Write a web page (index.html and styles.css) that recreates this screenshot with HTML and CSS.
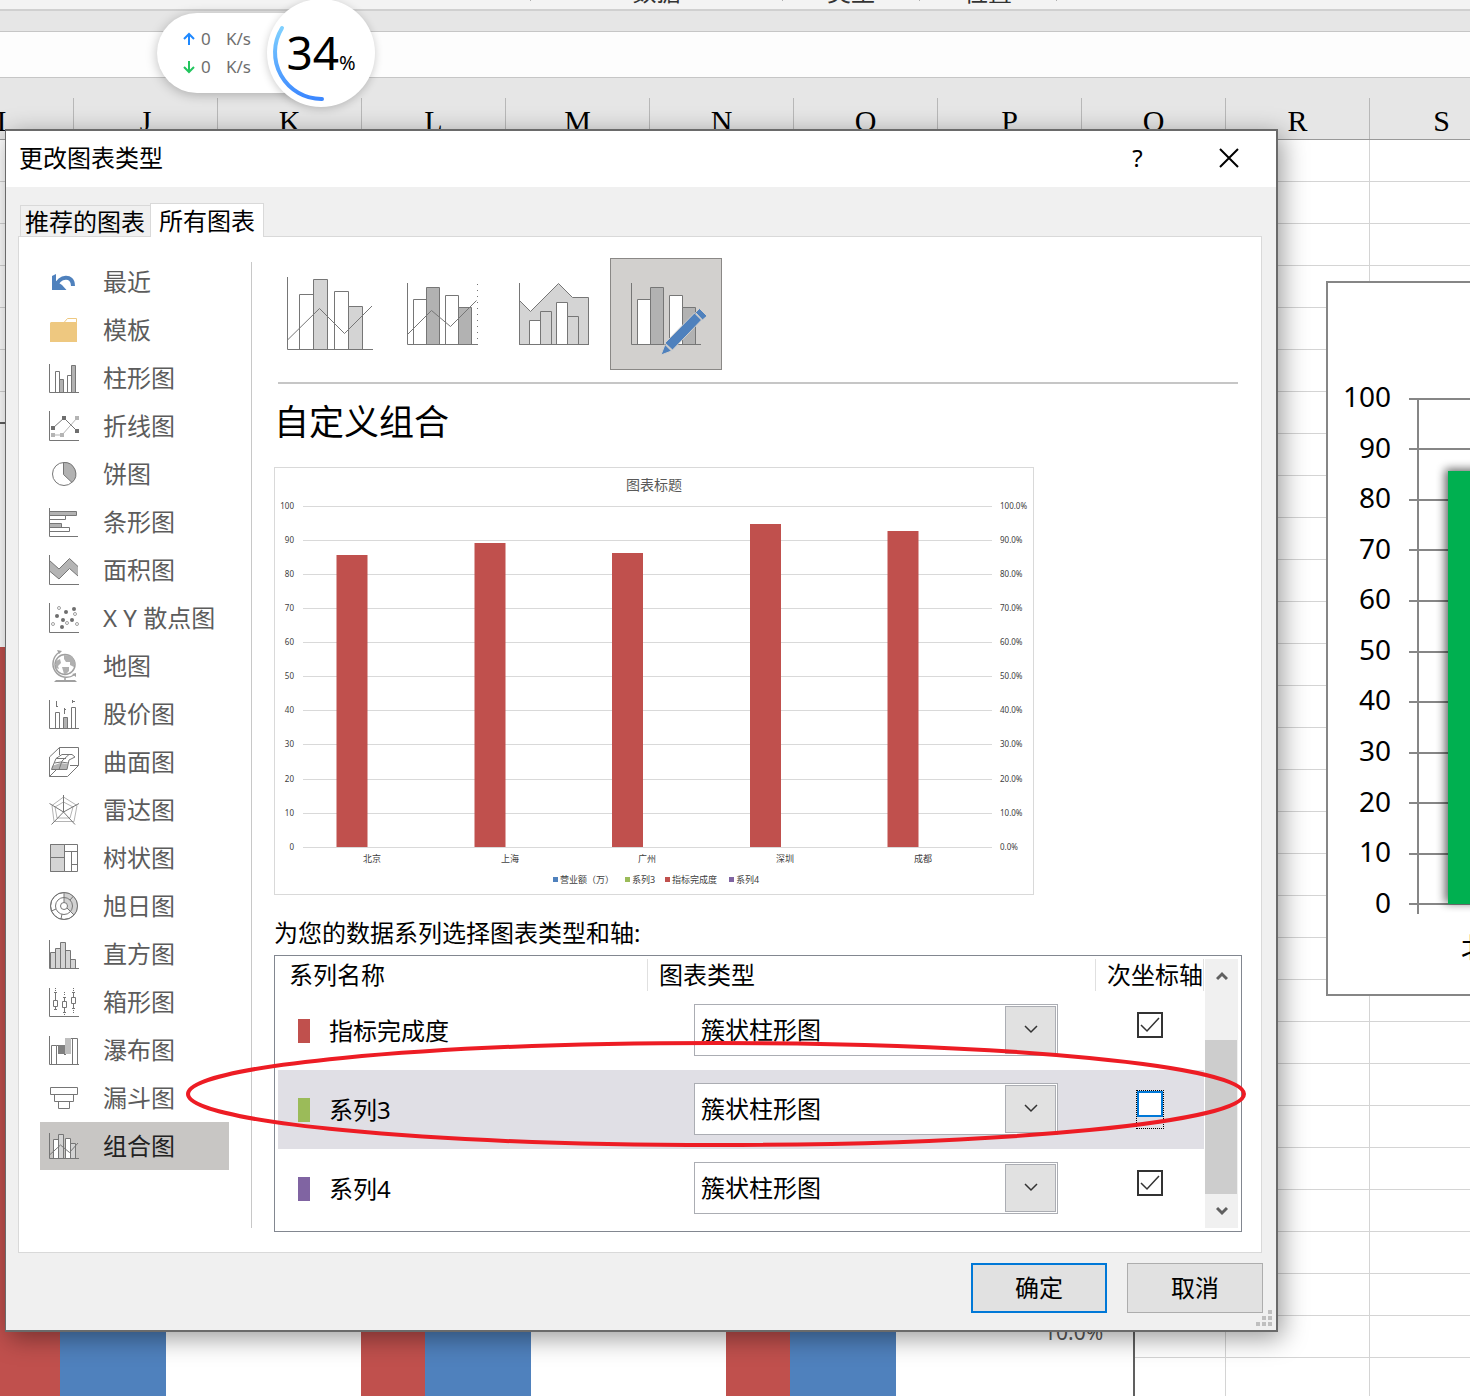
FILE: index.html
```html
<!DOCTYPE html>
<html lang="zh-CN">
<head>
<meta charset="utf-8">
<title>更改图表类型</title>
<meta name="viewport" content="width=device-width, initial-scale=1">
<link rel="stylesheet" href="styles.css">
</head>
<body>
<div class="desktop">

  <div class="workbook">
    <div class="ribbon">
      <span class="ribbon-group ribbon-group-first"></span>
      <span class="ribbon-group ribbon-group-wide">数据</span>
      <span class="ribbon-group">类型</span>
      <span class="ribbon-group">位置</span>
    </div>
    <div class="formula-bar"></div>
    <div class="columns">
      <span class="column">I</span><span class="column">J</span><span class="column">K</span><span class="column">L</span><span class="column">M</span><span class="column">N</span><span class="column">O</span><span class="column">P</span><span class="column">Q</span><span class="column">R</span><span class="column">S</span>
    </div>
    <div class="grid"></div>
  </div>

  <div class="sheet-chart sheet-chart-left">
    <svg width="1133" height="974" viewBox="0 0 1133 974">
      <g fill="#c0504d"><rect x="0" y="223" width="60" height="760"/><rect x="361" y="223" width="64" height="760"/><rect x="726" y="223" width="64" height="760"/></g>
      <g fill="#4f81bd"><rect x="60" y="300" width="106" height="680"/><rect x="425" y="300" width="106" height="680"/><rect x="790" y="300" width="106" height="680"/></g>
      <text class="left-axis" x="1044" y="916">10.0%</text>
    </svg>
  </div>

  <div class="sheet-chart sheet-chart-right">
    <svg width="600" height="711" viewBox="0 0 600 711">
      <defs><filter id="bar-shadow" x="-50%" y="-10%" width="200%" height="120%"><feGaussianBlur stdDeviation="5"/></filter></defs>
      <g stroke="#868686" stroke-width="2">
        <path d="M81 116H600M81 166H600M81 217H600M81 267H600M81 318H600M81 369H600M81 419H600M81 470H600M81 520H600M81 571H600M81 621H600M90 115V631"/>
      </g>
      <rect x="117" y="186" width="130" height="434" fill="#000" opacity=".6" filter="url(#bar-shadow)"/>
      <rect x="120" y="188" width="130" height="433" fill="#00b050"/>
      <g class="right-axis" text-anchor="end">
        <text x="63" y="124">100</text><text x="63" y="175">90</text><text x="63" y="225">80</text><text x="63" y="276">70</text><text x="63" y="326">60</text><text x="63" y="377">50</text><text x="63" y="427">40</text><text x="63" y="478">30</text><text x="63" y="529">20</text><text x="63" y="579">10</text><text x="63" y="630">0</text>
      </g>
      <text class="right-axis" x="133" y="675">北京</text>
    </svg>
  </div>

  <section class="dialog" role="dialog" aria-labelledby="dialog-title">
    <header class="titlebar">
      <h1 class="title" id="dialog-title">更改图表类型</h1>
      <button class="caption-button" type="button" aria-label="帮助">?</button>
      <button class="caption-button" type="button" aria-label="关闭"><svg width="20" height="20" viewBox="0 0 20 20" fill="none" stroke="#000" stroke-width="2"><path d="M1 1L19 19M19 1L1 19"/></svg></button>
    </header>

    <div class="tabs" role="tablist">
      <button class="tab" type="button" role="tab">推荐的图表</button>
      <button class="tab tab-active" type="button" role="tab" aria-selected="true">所有图表</button>
    </div>

    <div class="panel">
      <nav class="types">
        <button class="type" type="button"><svg class="icon" viewBox="0 0 32 32"><path fill="#4f81bd" d="M4 10L8 8V15L14 19L18.500 24H4Z"/><path fill="none" stroke="#4f81bd" stroke-width="4" d="M8 20C11 10 25 8 25 20"/></svg>最近</button>
        <button class="type" type="button"><svg class="icon" viewBox="0 0 32 32"><path fill="#eec880" d="M3 8H29V28H2V9Z"/><path fill="#fff" stroke="#eec880" d="M16 8.500L19.500 4.500H28.500V8.500Z"/></svg>模板</button>
        <button class="type" type="button"><svg class="icon" viewBox="0 0 32 32"><path class="w" d="M7.500 9.500h4v21h-4zM19.500 13.500h4v17h-4z"/><path class="m" d="M11.500 17.500h4v13h-4zM23.500 3.500h4v27h-4z"/><path class="a" d="M1.500 2V30.500H31"/></svg>柱形图</button>
        <button class="type" type="button"><svg class="icon" viewBox="0 0 32 32"><path fill="none" stroke="#b4b4b4" d="M5 25H14L29 8"/><path fill="#b4b4b4" d="M3 23h4v4h-4zM12 23h4v4h-4zM27 6h4v4h-4z"/><path class="a" d="M5 18L16 8L29 21M1.500 1V30.500H31"/><path fill="#6e6e6e" d="M3 16h4v4h-4zM14 6h4v4h-4zM27 19h4v4h-4z"/></svg>折线图</button>
        <button class="type" type="button"><svg class="icon" viewBox="0 0 32 32"><circle class="w" cx="16" cy="16" r="11.500"/><path class="m" d="M15.500 4.500V16.500L24 24.500A11.500 11.500 0 0 0 15.500 4.500Z"/></svg>饼图</button>
        <button class="type" type="button"><svg class="icon" viewBox="0 0 32 32"><path class="m" d="M1.500 5.500h27v4h-27zM1.500 17.500h12v4h-12z"/><path class="w" d="M1.500 9.500h16v4h-16zM1.500 21.500h20v4h-20z"/><path class="a" d="M1.500 2V30.500H30"/></svg>条形图</button>
        <button class="type" type="button"><svg class="icon" viewBox="0 0 32 32"><path fill="#b4b4b4" d="M1.500 6.500L11 15L21.500 4.500L30 12.500V22L21.500 14.500L11 25L1.500 17Z"/><path class="a" d="M1.500 6.500L11 15L21.500 4.500L30 12.500M30 22L21.500 14.500L11 25L1.500 17M1.500 1V30.500H31"/></svg>面积图</button>
        <button class="type" type="button"><svg class="icon" viewBox="0 0 32 32"><g fill="#6e6e6e"><circle cx="9" cy="14" r="2"/><circle cx="18" cy="10" r="2"/><circle cx="26" cy="7" r="2"/><circle cx="15" cy="18" r="2"/><circle cx="24" cy="18" r="2"/><circle cx="14" cy="25" r="2"/></g><g fill="#fff" stroke="#a0a0a0"><circle cx="11" cy="6" r="1.500"/><circle cx="27" cy="12" r="1.500"/><circle cx="5" cy="22" r="1.500"/><circle cx="19" cy="21" r="1.500"/><circle cx="29" cy="22" r="1.500"/></g><path class="a" d="M1.500 1V30.500H31"/></svg>X Y 散点图</button>
        <button class="type" type="button"><svg class="icon" viewBox="0 0 32 32"><circle cx="17" cy="14.500" r="10" fill="#fff" stroke="#a0a0a0" stroke-width="1.500"/><path fill="#b0b0b0" d="M16 5L24 6L27 12L26 17L22 15V12H18L16 9ZM8 11L12 9L13 13L10 16L11 19L8 18ZM14 17H21V21L18 24H16Z"/><path fill="none" stroke="#a0a0a0" stroke-width="1.500" d="M11 2.500A13 13 0 1 0 26 25M17 27V30"/><path fill="#a0a0a0" d="M9 0L14 1L11 4ZM24 24L28 23V27ZM8 30H27L29 32H6Z"/></svg>地图</button>
        <button class="type" type="button"><svg class="icon" viewBox="0 0 32 32"><path class="w" d="M7.500 14.500h4v16h-4zM23.500 9.500h4v21h-4z"/><path class="m" d="M15.500 19.500h4v11h-4z"/><path class="a" d="M1.500 2V30.500H31M8.500 3V9M8.500 8.500H10M16.500 10V16M16.500 11.500H18M24.500 2V5M24.500 3.500H27"/></svg>股价图</button>
        <button class="type" type="button"><svg class="icon" viewBox="0 0 32 32"><path class="w" d="M1.500 11L11.500 1.500H30.500V19.500L19.500 30.500H1.500Z"/><path fill="#b4b4b4" d="M4 20L12 17L20 18L19 23.500H3.500Z"/><path class="a" d="M3.500 23.500L8 12.500L14 8.500H24L27 11L21 14L19 23.500ZM11 23.500L14 15L21 8.500M6.500 17L13 16L20 17M8 12.500H18M11.500 1.500V9M1.500 30.500L8 24M22 19.500H30.500"/></svg>曲面图</button>
        <button class="type" type="button"><svg class="icon" viewBox="0 0 32 32"><path fill="none" stroke="#b4b4b4" d="M15.500 3L29 11.500L26 27.500H6L4 11.500ZM15.500 8L25 13L22 24H9L7 13Z"/><path class="a" d="M15.500 1V18L31 9.500M15.500 18L27 30.500M15.500 18L3.500 30.500M15.500 18L1.500 9.500"/></svg>雷达图</button>
        <button class="type" type="button"><svg class="icon" viewBox="0 0 32 32"><path class="w" d="M2.500 2.500h27v27h-27z"/><path class="l" d="M2.500 2.500h14v27h-14z"/><path class="a" d="M2.500 15.500H16.500M16.500 9.500H29.500M23.500 9.500V29.500M23.500 22.500H29.500"/></svg>树状图</button>
        <button class="type" type="button"><svg class="icon" viewBox="0 0 32 32"><circle class="w" cx="16" cy="16" r="13.500"/><path fill="#d2d2d2" d="M16 2.500A13.500 13.500 0 0 1 26 25L16 16Z"/><circle class="a" cx="16" cy="16" r="13.500"/><circle class="a" cx="16" cy="16" r="8.500"/><circle class="w" cx="16" cy="16" r="3.500"/><path class="a" d="M16 2.500V12.500M19 18L26 25M22 10L25.500 6M3.500 21L8 19M14 24L13 29"/></svg>旭日图</button>
        <button class="type" type="button"><svg class="icon" viewBox="0 0 32 32"><path class="l" d="M2.500 14.500h5v16h-5zM7.500 10.500h5v20h-5zM12.500 4.500h5v26h-5zM17.500 12.500h5v18h-5zM22.500 21.500h5v9h-5z"/><path class="a" d="M1.500 2V30.500H31"/></svg>直方图</button>
        <button class="type" type="button"><svg class="icon" viewBox="0 0 32 32"><path class="a" d="M1.500 2V30.500H31M7.500 6V24M6 6.500H9M6 23.500H9M16.500 11V27M15 11.500H18M15 26.500H18M25.500 6V23M24 6.500H27M24 22.500H27"/><path class="w" d="M5.500 14.500h4v6h-4zM14.500 15.500h4v6h-4zM23.500 11.500h4v6h-4z"/><path fill="#6e6e6e" d="M7 2h1v1h-1zM7 4h1v1h-1zM16 6h1v1h-1zM16 8h1v1h-1zM16 28h1v1h-1zM25 2h1v1h-1zM25 4h1v1h-1zM25 24h1v1h-1zM25 26h1v1h-1z"/></svg>箱形图</button>
        <button class="type" type="button"><svg class="icon" viewBox="0 0 32 32"><path class="w" d="M3.500 11.500h5v19h-5zM24.500 4.500h5v26h-5z"/><path fill="#808080" d="M10 11h7v9h-7z"/><path fill="#bfbfbf" d="M17 4h6v16h-6z"/><path class="a" d="M1.500 2V30.500H31M8.500 11.500h2M16 20.500h2M23 4.500h2"/></svg>瀑布图</button>
        <button class="type" type="button"><svg class="icon" viewBox="0 0 32 32"><path class="w" d="M2.500 5.500h27v7h-27zM6.500 12.500h19v7h-19zM10.500 19.500h11v7h-11z"/></svg>漏斗图</button>
        <button class="type type-active" type="button"><svg class="icon" viewBox="0 0 32 32"><path class="w" d="M5.500 9.500h5v19h-5zM17.500 8.500h5v20h-5z"/><path class="l" d="M10.500 4.500h5v24h-5zM22.500 13.500h5v15h-5z"/><path class="a" d="M1.500 25L12.500 15L21.500 22.500L30 13M1.500 3V28.500H31"/></svg>组合图</button>
      </nav>

      <div class="main">
        <div class="subtypes">
          <button class="subtype" type="button" aria-label="簇状柱形图 - 折线图"><svg viewBox="0 0 112 112"><path class="w" d="M25.500 36.500h14v55h-14zM60.500 33.500h14v58h-14z"/><path class="l" d="M39.500 21.500h14v70h-14zM74.500 48.500h14v43h-14z"/><path class="a" d="M13.500 82L45.500 50.500L70.500 75.500L98 48M13.500 19V91.500H99"/></svg></button>
          <button class="subtype" type="button" aria-label="簇状柱形图 - 次坐标轴上的折线图"><svg viewBox="0 0 112 112"><path class="w" d="M27.500 41.500h13v45h-13zM59.500 37.500h13v49h-13z"/><path class="m" d="M40.500 29.500h13v57h-13zM72.500 49.500h13v37h-13z"/><path class="a" d="M21.500 76.500L45.500 52.500L64.500 68.500L90.500 42.500M21.500 25V86.500H92"/><path class="a" stroke-dasharray="1 5" d="M91.500 26V86"/></svg></button>
          <button class="subtype" type="button" aria-label="堆积面积图 - 簇状柱形图"><svg viewBox="0 0 112 112"><path class="l" d="M21.500 42.500L32.500 53.500L60.500 25.500L74.500 39.500H90.500V86.500H21.500Z"/><path class="w" d="M31.500 62.500h11v24h-11zM58.500 44.500h11v42h-11z"/><path class="l" d="M42.500 53.500h11v33h-11zM69.500 58.500h11v28h-11z"/><path class="a" d="M21.500 25V86.500H91"/></svg></button>
          <button class="subtype subtype-active" type="button" aria-label="自定义组合"><svg viewBox="0 0 112 112"><path class="w" d="M27.500 41.500h13v45h-13zM59.500 37.500h13v49h-13z"/><path class="m" d="M40.500 29.500h13v57h-13zM72.500 49.500h13v37h-13z"/><path class="a" d="M21.500 25V86.500H91"/><g fill="#4f81bd" stroke="#d2d0ce"><path d="M84.500 55L91.500 62L62.500 92L55 85Z"/><path d="M85.500 54.500L89.500 50.500L97 58L92.500 62Z"/><path d="M55 86.500L61.500 93L51 97Z"/></g></svg></button>
        </div>
        <hr class="rule">
        <h2 class="heading">自定义组合</h2>

        <div class="preview">
          <svg width="758" height="426" viewBox="1 1 758 426">
            <path stroke="#d9d9d9" d="M29 39.500H718M29 73.500H718M29 107.500H718M29 141.500H718M29 175.500H718M29 209.500H718M29 243.500H718M29 277.500H718M29 312.500H718M29 346.500H718M29 380.500H718"/>
            <g fill="#c0504d"><rect x="62.500" y="88" width="31" height="292"/><rect x="200.500" y="76" width="31" height="304"/><rect x="338" y="86" width="31" height="294"/><rect x="476" y="57" width="31" height="323"/><rect x="613.500" y="64" width="31" height="316"/></g>
            <text class="chart-title" x="380" y="23">图表标题</text>
            <g class="tick" text-anchor="end"><text x="20" y="42">100</text><text x="20" y="76">90</text><text x="20" y="110">80</text><text x="20" y="144">70</text><text x="20" y="178">60</text><text x="20" y="212">50</text><text x="20" y="246">40</text><text x="20" y="280">30</text><text x="20" y="315">20</text><text x="20" y="349">10</text><text x="20" y="383">0</text></g>
            <g class="tick"><text x="726" y="42">100.0%</text><text x="726" y="76">90.0%</text><text x="726" y="110">80.0%</text><text x="726" y="144">70.0%</text><text x="726" y="178">60.0%</text><text x="726" y="212">50.0%</text><text x="726" y="246">40.0%</text><text x="726" y="280">30.0%</text><text x="726" y="315">20.0%</text><text x="726" y="349">10.0%</text><text x="726" y="383">0.0%</text></g>
            <g class="category" text-anchor="middle"><text x="98" y="395">北京</text><text x="236" y="395">上海</text><text x="373" y="395">广州</text><text x="511" y="395">深圳</text><text x="649" y="395">成都</text></g>
            <g class="category"><text x="286" y="416">营业额（万）</text><text x="358" y="416">系列3</text><text x="398" y="416">指标完成度</text><text x="462" y="416">系列4</text></g>
            <path fill="#4f81bd" d="M279 410h5v5h-5z"/><path fill="#9bbb59" d="M351 410h5v5h-5z"/><path fill="#c0504d" d="M391 410h5v5h-5z"/><path fill="#8064a2" d="M455 410h5v5h-5z"/>
          </svg>
        </div>

        <p class="caption" id="series-caption">为您的数据系列选择图表类型和轴:</p>
        <div class="list">
          <table class="series" aria-labelledby="series-caption">
            <colgroup><col><col class="col-type"><col class="col-axis"></colgroup>
            <thead><tr><th>系列名称</th><th>图表类型</th><th>次坐标轴</th></tr></thead>
            <tbody>
              <tr>
                <td><span class="name"><i class="swatch swatch-red"></i>指标完成度</span></td>
                <td class="cell-type"><label class="combo"><select class="combo-select" aria-label="指标完成度 图表类型"><option>簇状柱形图</option></select><span class="combo-arrow"><svg width="14" height="9" viewBox="0 0 14 9"><path d="M1 1L7 7L13 1"/></svg></span></label></td>
                <td class="cell-axis"><label class="tick-frame"><input class="tick-box" type="checkbox" checked aria-label="指标完成度 次坐标轴"></label></td>
              </tr>
              <tr class="row-active">
                <td><span class="name"><i class="swatch swatch-green"></i>系列3</span></td>
                <td class="cell-type"><label class="combo"><select class="combo-select" aria-label="系列3 图表类型"><option>簇状柱形图</option></select><span class="combo-arrow"><svg width="14" height="9" viewBox="0 0 14 9"><path d="M1 1L7 7L13 1"/></svg></span></label></td>
                <td class="cell-axis"><label class="tick-frame tick-frame-focus"><input class="tick-box" type="checkbox" aria-label="系列3 次坐标轴"></label></td>
              </tr>
              <tr>
                <td><span class="name"><i class="swatch swatch-purple"></i>系列4</span></td>
                <td class="cell-type"><label class="combo"><select class="combo-select" aria-label="系列4 图表类型"><option>簇状柱形图</option></select><span class="combo-arrow"><svg width="14" height="9" viewBox="0 0 14 9"><path d="M1 1L7 7L13 1"/></svg></span></label></td>
                <td class="cell-axis"><label class="tick-frame"><input class="tick-box" type="checkbox" checked aria-label="系列4 次坐标轴"></label></td>
              </tr>
            </tbody>
          </table>
          <div class="scrollbar">
            <button class="scroll-button" type="button" aria-label="向上滚动"><svg width="12" height="10" viewBox="0 0 12 10"><path d="M1 8L6 3L11 8"/></svg></button>
            <div class="scroll-track"><div class="scroll-thumb"></div></div>
            <button class="scroll-button" type="button" aria-label="向下滚动"><svg width="12" height="10" viewBox="0 0 12 10"><path d="M1 2L6 7L11 2"/></svg></button>
          </div>
        </div>
      </div>
    </div>

    <footer class="actions">
      <button class="action action-default" type="button">确定</button>
      <button class="action" type="button">取消</button>
    </footer>
    <svg class="grip" width="16" height="16" viewBox="0 0 16 16"><path fill="#bfbfbf" d="M12 0h4v4h-4zM6 6h4v4h-4zM12 6h4v4h-4zM0 12h4v4h-4zM6 12h4v4h-4zM12 12h4v4h-4z"/></svg>
  </section>

  <div class="meter">
    <div class="speeds">
      <span class="speed"><svg width="12" height="14" viewBox="0 0 12 14" fill="none" stroke="#1e88ff" stroke-width="2"><path d="M6 13V2M1 7L6 2L11 7"/></svg><span class="speed-value">0</span>K/s</span>
      <span class="speed"><svg width="12" height="14" viewBox="0 0 12 14" fill="none" stroke="#22c55e" stroke-width="2"><path d="M6 1V12M1 7L6 12L11 7"/></svg><span class="speed-value">0</span>K/s</span>
    </div>
    <div class="gauge">
      <svg class="gauge-arc" width="108" height="108" viewBox="0 0 108 108"><defs><linearGradient id="arc" x1="0" y1="0" x2="0" y2="1"><stop offset="0" stop-color="#7fd0ff"/><stop offset="1" stop-color="#3b87ff"/></linearGradient></defs><path d="M15 29A46.500 46.500 0 0 0 55 100" fill="none" stroke="url(#arc)" stroke-width="4" stroke-linecap="round"/></svg>
      <span class="gauge-text">34<small class="gauge-unit">%</small></span>
    </div>
  </div>

  <svg class="marker" width="1064" height="110" viewBox="0 0 1064 110"><ellipse cx="532" cy="55" rx="528" ry="51" fill="none" stroke="#ed1c24" stroke-width="4"/></svg>
</div>
</body>
</html>
```
FILE: styles.css
```css
* { box-sizing: border-box; }

body {
  margin: 0;
  font-family: "Noto Sans", "Noto Sans CJK SC", sans-serif;
  font-size: 24px;
  line-height: 32px;
  color: #000;
  background: #fff;
}

button, select { font: inherit; color: inherit; margin: 0; padding: 0; border: 0; border-radius: 0; background: none; }
svg { display: block; }

.desktop { position: relative; min-height: 100vh; overflow: hidden; display: flex; }

/* Workbook behind the dialog */
.workbook { flex: 1; min-width: 0; display: flex; flex-direction: column; background: #e6e6e6; }
.ribbon { display: flex; align-items: flex-end; height: 11px; padding-bottom: 8px; overflow: hidden; background: #f3f3f3; border-bottom: 2px solid #d0d0d0; color: #333; }
.ribbon-group { flex: none; width: 137px; height: 22px; line-height: 26px; text-align: center; border-right: 1px solid #b0b0b0; }
.ribbon-group-first { width: 531px; }
.ribbon-group-wide { width: 252px; }
.formula-bar { height: 47px; margin-top: 20px; background: #fdfdfd; border: solid #c6c6c6; border-width: 1px 0; }
.columns { display: flex; height: 62px; padding-top: 20px; border-bottom: 1px solid #999; overflow: hidden; }
.column { flex: none; width: 144px; padding-top: 7px; text-align: center; font-family: "Liberation Serif", serif; font-size: 30px; border-right: 1px solid #b8b8b8; }
.column:first-child { margin-left: -70px; }
.grid {
  flex: 1;
  background-color: #fff;
  background-image: linear-gradient(to right, #d4d4d4 1px, transparent 1px), linear-gradient(to bottom, #d4d4d4 1px, transparent 1px);
  background-size: 144px 42px;
  background-position: 73px 41px;
}

.sheet-chart { position: absolute; overflow: hidden; background: #fff; }
.sheet-chart-left { left: 0; top: 422px; bottom: 0; width: 1135px; border: solid #606060; border-width: 2px 2px 0 0; }
.sheet-chart-right { left: 1326px; right: -200px; top: 281px; height: 715px; border: 2px solid #868686; }
.left-axis { font-size: 21px; fill: #595959; }
.right-axis { font-size: 28px; fill: #000; }

/* Dialog window */
.dialog { position: absolute; left: 5px; right: 192px; top: 129px; border: solid #6a6a6a; border-width: 2px 2px 2px 1px; background: #f0f0f0; box-shadow: 4px 6px 24px rgba(0, 0, 0, .4); }
.titlebar { display: flex; align-items: center; height: 56px; padding: 0 2px 2px 13px; background: #fff; }
.title { flex: 1; margin: 0; font-size: 24px; font-weight: 400; }
.caption-button { display: flex; align-items: center; justify-content: center; width: 91px; height: 54px; }

.tabs { display: flex; align-items: flex-end; height: 49px; padding-left: 14px; }
.tab { height: 31px; padding: 2px 5px 0 4px; line-height: 28px; border: 1px solid #d9d9d9; border-width: 1px 0 0 1px; }
.tab-active { position: relative; height: 34px; margin-bottom: -1px; padding: 0 8px; border-width: 1px 1px 0; background: #fff; }

.panel { display: flex; margin: 0 14px 0 12px; padding: 21px 19px 20px 21px; border: 1px solid #d9d9d9; background: #fff; }
.types {
  flex: none;
  width: 212px;
  padding-right: 23px;
  background: linear-gradient(#c8c8c8, #c8c8c8) right 4px / 1px calc(100% - 8px) no-repeat;
  background-position: right center;
}
.type { display: flex; align-items: center; gap: 23px; width: 189px; height: 48px; padding-left: 8px; text-align: left; color: #5c5c5c; }
.type-active { background: #c8c6c4; color: #222; }
.icon { flex: none; width: 32px; height: 32px; }
.a { fill: none; stroke: #767676; }
.w { fill: #fff; stroke: #767676; }
.m { fill: #b2b2b2; stroke: #767676; }
.l { fill: #d4d4d4; stroke: #767676; }

.main { flex: 1; min-width: 0; padding-left: 22px; }
.subtypes { display: flex; }
.subtype { width: 112px; height: 112px; }
.subtype-active { border: 1px solid #8a8886; background: #d2d0ce; }
.subtype-active svg { margin: -1px; }
.subtype svg { width: 112px; height: 112px; }
.rule { height: 2px; margin: 12px 4px 0; border: 0; background: #c6c6c6; }
.heading { margin: 18px 0 25px; font-size: 35px; line-height: 40px; font-weight: 400; }
.preview { width: 760px; max-width: 100%; overflow: hidden; border: 1px solid #d9d9d9; }
.chart-title { font-size: 14px; text-anchor: middle; fill: #595959; }
.tick { font-size: 8px; fill: #404040; }
.category { font-size: 9px; fill: #404040; }
.caption { margin: 20px 0 4px; line-height: 36px; }

/* Series list */
.list { display: flex; gap: 1px; padding: 3px; border: 1px solid #828790; }
.series { flex: 1; min-width: 0; table-layout: fixed; border-collapse: separate; border-spacing: 0; }
.col-type { width: 448px; }
.col-axis { width: 108px; }
.series th { height: 32px; padding: 0 0 0 11px; font-weight: 400; text-align: left; white-space: nowrap; border-right: 1px solid #e0e0e0; }
.series td { height: 79px; padding: 0; vertical-align: middle; }
.row-active { background: #e0dfe5; }
.name { display: flex; align-items: center; gap: 19px; padding-left: 20px; }
.swatch { width: 12px; height: 24px; }
.swatch-red { background: #c0504d; }
.swatch-green { background: #9bbb59; }
.swatch-purple { background: #8064a2; }
.series .cell-type { padding: 0 0 2px 46px; }
.series .cell-axis { padding-left: 40px; }

.combo { display: grid; width: 364px; height: 52px; border: 1px solid #abadb3; background: #fff; }
.combo-select { grid-area: 1 / 1; padding: 0 56px 0 6px; appearance: none; outline: 0; }
.combo-arrow { grid-area: 1 / 1; justify-self: end; display: flex; align-items: center; justify-content: center; width: 51px; margin: 1px; border: 1px solid #abadb3; background: #e1e1e1; pointer-events: none; }
.combo-arrow svg { fill: none; stroke: #333; stroke-width: 1.5; }

.tick-frame { display: block; width: 28px; height: 39px; border: 1px dotted transparent; }
.tick-box { display: block; width: 26px; height: 26px; margin: 0; appearance: none; border: 2px solid #333; background: #fff; }
.tick-box:checked { background-image: url("data:image/svg+xml,%3Csvg xmlns='http://www.w3.org/2000/svg' viewBox='0 0 22 22'%3E%3Cpath d='M2 11L8 17L20 4' fill='none' stroke='%23333' stroke-width='1.500'/%3E%3C/svg%3E"); }
.tick-frame-focus { border-color: #000; }
.tick-frame-focus .tick-box { border-color: #0078d7; }

.scrollbar { flex: none; display: flex; flex-direction: column; width: 33px; background: #f0f0f0; }
.scroll-button { display: flex; align-items: center; justify-content: center; height: 34px; }
.scroll-button svg { fill: none; stroke: #606060; stroke-width: 3; }
.scroll-track { flex: 1; display: flex; flex-direction: column; justify-content: flex-end; }
.scroll-thumb { height: 154px; margin-right: 1px; background: #cdcdcd; }

.actions { display: flex; justify-content: flex-end; gap: 20px; padding: 10px 13px 17px; }
.action { width: 136px; height: 50px; border: 1px solid #adadad; background: #e1e1e1; }
.action-default { border: 2px solid #0078d7; }
.grip { position: absolute; right: 4px; bottom: 4px; }

/* Floating network meter */
.meter { position: absolute; left: 157px; top: -1px; display: flex; align-items: center; color: #6e6e6e; font-size: 17px; line-height: 28px; }
.speeds { width: 164px; height: 80px; padding: 12px 0 12px 26px; border-radius: 40px 0 0 40px; background: #fff; box-shadow: 0 2px 12px rgba(0, 0, 0, .25); }
.speed { display: flex; align-items: center; }
.speed-value { width: 25px; margin-left: 6px; }
.gauge { position: relative; width: 108px; height: 108px; padding-top: 8px; margin-left: -54px; border-radius: 50%; background: #fff; box-shadow: 0 2px 8px rgba(0, 0, 0, .2); display: flex; align-items: center; justify-content: center; color: #000; }
.gauge-arc { position: absolute; left: 0; top: 0; }
.gauge-text { font-size: 46px; line-height: 54px; }
.gauge-unit { font-size: 20px; }

/* Hand-drawn highlight over the series row */
.marker { position: absolute; left: 184px; top: 1039px; pointer-events: none; }
```
